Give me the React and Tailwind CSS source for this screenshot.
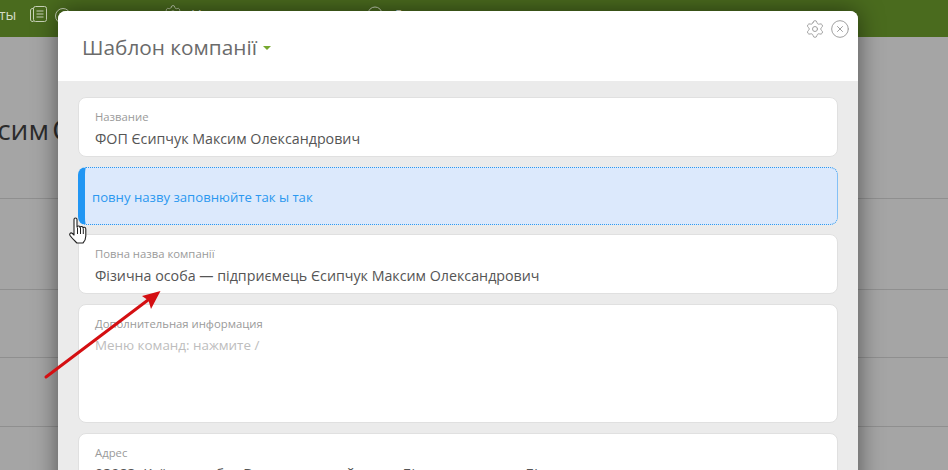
import { Settings, CircleX } from 'lucide-react'

const font = { fontFamily: '"Open Sans", "Noto Sans", sans-serif' }

function Field({ label, value, className = '', valueClassName = 'mt-[4px]' }) {
  return (
    <div className={`bg-white rounded-lg border border-[#e0e0e0] px-4 ${className}`}>
      <p className="pt-[11px] text-[11.300px] leading-[16px] text-[#9a9a9a]">{label}</p>
      {value && <p className={`whitespace-nowrap text-[14.250px] leading-[20px] text-[#555] ${valueClassName}`}>{value}</p>}
    </div>
  )
}

function Arrow() {
  return (
    <svg className="absolute left-[40px] top-[285px] z-20" width="126" height="98" viewBox="0 0 126 98">
      <path d="M6 92 L112 12" stroke="#d40f12" strokeWidth="3" strokeLinecap="round" fill="none" />
      <path d="M120.500 6 L102 11 L108.500 15.500 L111 24 Z" fill="#d40f12" />
    </svg>
  )
}

function HandCursor() {
  return (
    <svg className="absolute left-[68px] top-[216px] z-20" width="20" height="28" viewBox="0 0 20 28">
      <path
        d="M6 3.500 C6 1.500 9 1.500 9 3.500 V11 C9.500 9.500 12 9.500 12 11.500 C12.500 10 15 10.200 15 12 C15.500 10.800 17.800 11 17.800 13 V20 C17.800 23.500 16 26 15 27 H9 C7 25 4 22.500 2 19.500 C1 18 2.500 16 4.500 17.500 L6 19 Z"
        fill="#fff"
        stroke="#222"
        strokeWidth="1.100"
        strokeLinejoin="round"
      />
      <path d="M9.500 11.500 V18 M12.500 11.500 V18 M15.300 12.500 V18" stroke="#222" strokeWidth="1" />
    </svg>
  )
}

export default function App() {
  return (
    <div className="relative h-[470px] w-[948px] overflow-hidden bg-[#a5a5a5]" style={font}>
      {/* page behind the overlay */}
      <div className="flex h-[37px] items-start bg-[#4a6b1e] text-[14px] leading-[19px] text-[#d5dcc8]">
        <span className="ml-[-1px] mt-[5px] w-[31px]">ты</span>
        <svg className="mt-[6px]" width="17" height="17" viewBox="0 0 17 17" fill="none" stroke="#c8d2b8">
          <rect x="3.500" y="0.500" width="13" height="15" rx="2" />
          <path d="M3.500 2.500 C1 2.500 0.500 3 0.500 5 V13 C0.500 15 1 15.500 3.500 15.500 M6.500 5 H13.500 M6.500 8 H13.500 M6.500 11 H13.500" />
        </svg>
        <span className="ml-[8px] mt-[8px] h-[16px] w-[16px] rounded-full border border-[#c8d2b8]" />
        <span className="ml-[93px] mt-[4px]"><Settings size={18} strokeWidth={1} /></span>
        <span className="ml-[10px] mt-[5px] w-[9px]">У</span>
        <svg className="ml-[166px] mt-[6px]" width="16" height="16" viewBox="0 0 16 16" fill="none" stroke="#c8d2b8">
          <circle cx="8" cy="8" r="7" />
        </svg>
        <span className="ml-[10px] mt-[5px]">Д</span>
      </div>
      <div className="text-[28px] leading-[32px] text-[#2c2c2c]">
        <div className="h-[162px] overflow-hidden whitespace-nowrap border-b border-[#8f8f8f] pt-[76px]">
          <span className="ml-[-58px] [word-spacing:-4px]">Максим Олександрович</span>
        </div>
        <div className="h-[91px] border-b border-[#8f8f8f]" />
        <div className="h-[68px] border-b border-[#8f8f8f]" />
        <div className="h-[69px] border-b border-[#8f8f8f]" />
      </div>

      {/* modal */}
      <div className="absolute left-[58px] top-[11px] z-10 h-[500px] w-[800px] overflow-hidden rounded-t-lg bg-[#ebebeb] shadow-[0_0_24px_rgba(0,0,0,0.5)]">
        <div className="relative flex h-[70px] items-center bg-white pl-6">
          <h1 className="pt-[1px] text-[20.800px] font-normal leading-[30px] text-[#6b6b6b]">Шаблон компанії</h1>
          <span className="ml-[6px] mt-[3px] h-0 w-0 border-x-[4px] border-t-[4px] border-x-transparent border-t-[#76a82e]" />
          <div className="absolute right-[8px] top-[8px] flex items-center gap-[5px] text-[#a0a0a0]">
            <Settings size={20} strokeWidth={1.200} />
            <CircleX size={20} strokeWidth={1.200} />
          </div>
        </div>
        <div className="flex flex-col px-5 pt-4">
          <Field className="h-[60px]" label="Название" value="ФОП Єсипчук Максим Олександрович" />
          <div className="mt-[10px] flex h-[58px] items-center rounded-lg border border-dotted border-[#2b98f0] border-l-[7px] border-l-[#2196f3] bg-[#dce9fc] pl-[7px] pt-[4px] [border-left-style:solid]">
            <p className="text-[13.150px] text-[#2b98f0]">повну назву заповнюйте так ы так</p>
          </div>
          <Field className="mt-[9px] h-[60px]" label="Повна назва компанії" value="Фізична особа — підприємець Єсипчук Максим Олександрович" />
          <div className="mt-[10px] h-[119px] rounded-lg border border-[#e0e0e0] bg-white px-4">
            <p className="pt-[11px] text-[11.300px] leading-[16px] text-[#9a9a9a]">Дополнительная информация</p>
            <p className="mt-[3px] text-[13.400px] leading-[20px] text-[#bdbdbd]">Меню команд: нажмите /</p>
          </div>
          <Field
            className="mt-[10px] h-[60px]"
            valueClassName="mt-[3px]"
            label="Адрес"
            value="03083, Київська обл., Вишгородський р-н, с. Білогородка, вул. Бі"
          />
        </div>
      </div>

      <HandCursor />
      <Arrow />
    </div>
  )
}
